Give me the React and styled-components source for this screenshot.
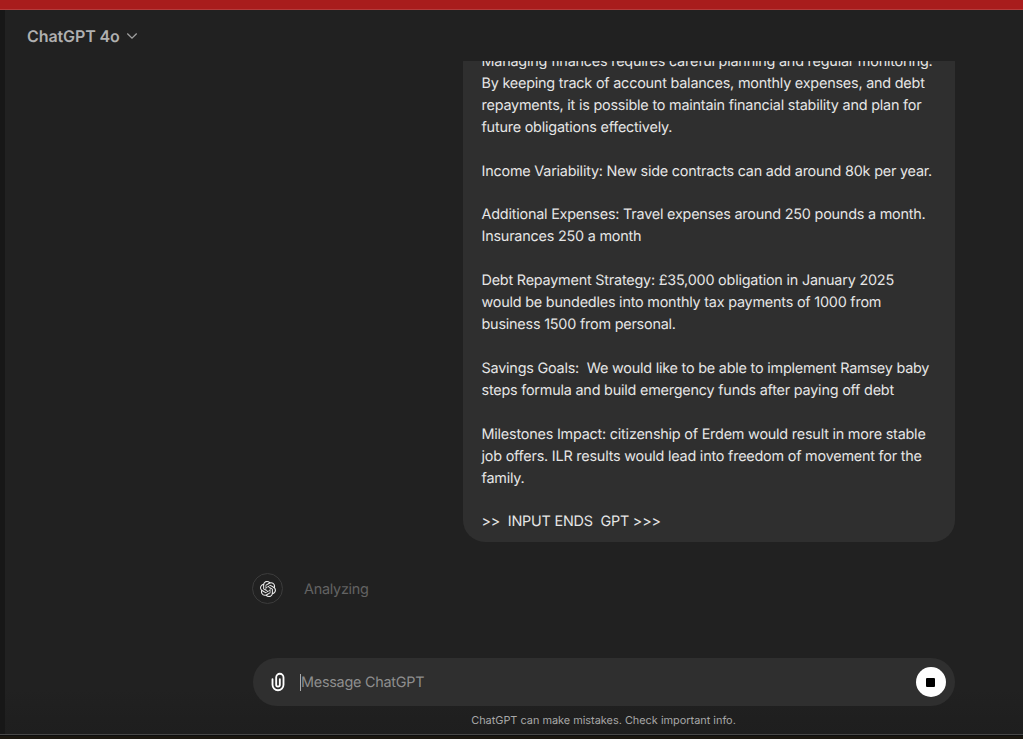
import { Component } from 'react';
import styled, { createGlobalStyle } from "styled-components";
import { SiOpenai } from "react-icons/si";

const lines = [
  'Managing finances requires careful planning and regular monitoring.',
  'By keeping track of account balances, monthly expenses, and debt',
  'repayments, it is possible to maintain financial stability and plan for',
  'future obligations effectively.',
  '',
  'Income Variability: New side contracts can add around 80k per year.',
  '',
  'Additional Expenses: Travel expenses around 250 pounds a month.',
  'Insurances 250 a month',
  '',
  'Debt Repayment Strategy: £35,000 obligation in January 2025',
  'would be bundedles into monthly tax payments of 1000 from',
  'business 1500 from personal.',
  '',
  'Savings Goals:  We would like to be able to implement Ramsey baby',
  'steps formula and build emergency funds after paying off debt',
  '',
  'Milestones Impact: citizenship of Erdem would result in more stable',
  'job offers. ILR results would lead into freedom of movement for the',
  'family.',
  '',
  '>>  INPUT ENDS  GPT >>>',
];

class App extends Component {
  render() {
    return (
      <Container>
        <GlobalStyle />
        <Topbar />
        <Window>
          <Sidebar />
          <Main>
            <Header>
              <Model>ChatGPT 4o</Model>
              <Chevron viewBox="0 0 12 8">
                <path d="M1.3 1.5 6 6.2l4.7-4.7" />
              </Chevron>
            </Header>
            <Thread>
              <Bubble>
                {lines.map((line, i) => <Line key={i}>{line}</Line>)}
              </Bubble>
              <Reply>
                <Avatar><SiOpenai size={16} /></Avatar>
                <Status>Analyzing</Status>
              </Reply>
            </Thread>
            <Composer>
              <Clip viewBox="0 0 24 24">
                <path d="M9 7a5 5 0 0 1 10 0v8a7 7 0 1 1-14 0V9a1 1 0 0 1 2 0v6a5 5 0 0 0 10 0V7a3 3 0 1 0-6 0v8a1 1 0 1 0 2 0V9a1 1 0 1 1 2 0v6a3 3 0 1 1-6 0z" />
              </Clip>
              <Caret />
              <Placeholder>Message ChatGPT</Placeholder>
              <Stop><Square /></Stop>
            </Composer>
            <Note>ChatGPT can make mistakes. Check important info.</Note>
          </Main>
        </Window>
        <Bottom />
      </Container>
    )
  }
}

const GlobalStyle = createGlobalStyle`
  * {
    box-sizing:border-box;
  }
  body {
    margin:0;
    background:#212121;
    font-family:Inter, "Liberation Sans", sans-serif;
    -webkit-font-smoothing:antialiased;
    text-rendering:geometricPrecision;
  }
`;

const Container = styled.div`
  width:100%;
  height:100vh;
  display:flex;
  flex-direction:column;
  overflow:hidden;
`;

const Topbar = styled.div`
  height:10px;
  flex:none;
  background:#a81c1c;
  border-bottom:1px solid #b33b3b;
`;

const Window = styled.div`
  flex:1;
  min-height:0;
  display:flex;
  border-bottom:1px solid #484848;
`;

const Sidebar = styled.div`
  width:5px;
  background:#171717;
`;

const Main = styled.div`
  flex:1;
  display:flex;
  flex-direction:column;
  background:linear-gradient(#212121 calc(100% - 45px), #1e1e1e);
`;

const Header = styled.div`
  height:51px;
  flex:none;
  display:flex;
  align-items:center;
  padding-left:22px;
`;

const Model = styled.div`
  font-size:16px;
  font-weight:600;
  letter-spacing:-0.1px;
  color:#b0b0b0;
`;

const Chevron = styled.svg`
  width:12px;
  height:8px;
  margin:1px 0 0 6px;
  fill:none;
  stroke:#a0a0a0;
  stroke-width:1.3;
`;

const Thread = styled.div`
  flex:1;
  min-height:0;
  overflow:hidden;
  display:flex;
  flex-direction:column;
  justify-content:flex-end;
  width:702.5px;
  margin-left:247px;
`;

const Bubble = styled.div`
  flex:none;
  width:491.5px;
  align-self:flex-end;
  padding:10px 18.5px 8.2px;
  border-radius:22px;
  background:#2f2f2f;
`;

const Line = styled.div`
  height:21.93px;
  line-height:21.93px;
  font-size:14.4px;
  letter-spacing:-0.21px;
  color:#e6e6e6;
  white-space:pre;
`;

const Reply = styled.div`
  flex:none;
  display:flex;
  align-items:center;
  height:31px;
  margin:31.5px 0 54px;
`;

const Avatar = styled.div`
  width:31px;
  height:31px;
  border:1px solid #3c3c3c;
  border-radius:50%;
  display:flex;
  align-items:center;
  justify-content:center;
  color:#ececec;
`;

const Status = styled.div`
  margin:2px 0 0 21px;
  font-size:14.4px;
  letter-spacing:-0.25px;
  color:#636363;
`;

const Composer = styled.div`
  flex:none;
  width:702px;
  height:48px;
  margin-left:247.5px;
  padding:0 9px 0 14.5px;
  border-radius:24px;
  background:#2f2f2f;
  display:flex;
  align-items:center;
`;

const Clip = styled.svg`
  width:22px;
  height:22px;
  fill:#fff;
`;

const Caret = styled.div`
  width:1px;
  height:17px;
  margin-left:11px;
  background:#aaa;
`;

const Placeholder = styled.div`
  flex:1;
  margin-top:1px;
  font-size:14.4px;
  letter-spacing:-0.25px;
  color:#8e8e8e;
`;

const Stop = styled.div`
  width:30px;
  height:30px;
  border-radius:50%;
  background:#fff;
  display:flex;
  align-items:center;
  justify-content:center;
`;

const Square = styled.div`
  width:9px;
  height:9px;
  border-radius:1px;
  background:#000;
`;

const Note = styled.div`
  flex:none;
  height:28px;
  line-height:29px;
  width:702px;
  margin-left:247.5px;
  text-align:center;
  font-size:10.9px;
  color:#a8a8a8;
`;

const Bottom = styled.div`
  flex:none;
  height:4px;
  background:#1b1710;
  border-top:1px solid #0e0e0e;
`;

export default App;
